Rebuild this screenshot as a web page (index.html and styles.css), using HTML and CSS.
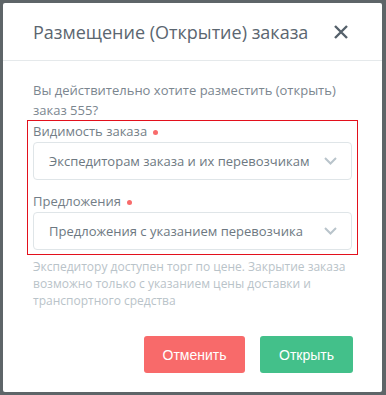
FILE: index.html
```html
<!DOCTYPE html>
<html lang="ru">
<head>
  <meta charset="UTF-8" />
  <meta name="viewport" content="width=device-width, initial-scale=1.0" />
  <title>Размещение заказа</title>
  <link rel="stylesheet" href="styles.css">
</head>
<body>
  <div class="modal">
    <div class="modal-header">
      <h2 class="modal-title">Размещение (Открытие) заказа</h2>
      <button class="close" aria-label="Закрыть">
        <svg width="14" height="14" viewBox="0 0 14 14">
          <path d="M1 1 L13 13 M13 1 L1 13" stroke="#55616b" stroke-width="2.4" stroke-linecap="butt" />
        </svg>
      </button>
    </div>

    <div class="modal-body">
      <p class="question">Вы действительно хотите разместить (открыть) заказ 555?</p>

      <div class="fields">
        <label class="field-label">Видимость заказа <span class="req"></span></label>
        <div class="select">
          <span>Экспедиторам заказа и их перевозчикам</span>
          <svg class="chev" width="13" height="8" viewBox="0 0 13 8">
            <path d="M1 1 L6.5 6.5 L12 1" fill="none" stroke="#b9c4cb" stroke-width="2" />
          </svg>
        </div>

        <label class="field-label">Предложения <span class="req"></span></label>
        <div class="select">
          <span>Предложения с указанием перевозчика</span>
          <svg class="chev" width="13" height="8" viewBox="0 0 13 8">
            <path d="M1 1 L6.5 6.5 L12 1" fill="none" stroke="#b9c4cb" stroke-width="2" />
          </svg>
        </div>
      </div>

      <p class="hint">Экспедитору доступен торг по цене. Закрытие заказа возможно только с указанием цены доставки и транспортного средства</p>
    </div>

    <div class="modal-footer">
      <button class="btn btn-cancel">Отменить</button>
      <button class="btn btn-ok">Открыть</button>
    </div>
  </div>
</body>
</html>
```

FILE: styles.css
```css
body {
  margin: 0;
  padding: 3px;
  background: #5e6568;
  font-family: 'Open Sans', sans-serif;
}

.modal {
  width: 379px;
  height: 389px;
  background: #fff;
  border-radius: 2px;
  box-sizing: border-box;
}

.modal-header {
  height: 58px;
  display: flex;
  align-items: center;
  justify-content: space-between;
  padding: 0 34px 0 30px;
  border-bottom: 1px solid #e5e9eb;
  box-sizing: border-box;
}

.modal-title {
  margin: 0;
  font-size: 18px;
  font-weight: normal;
  color: #5b6670;
}

.close {
  border: none;
  background: none;
  padding: 0;
  width: 14px;
  height: 14px;
  cursor: pointer;
}

.modal-body {
  padding: 19px 24px 0 24px;
}

.question {
  margin: 0 0 0 6px;
  font-size: 13px;
  line-height: 20px;
  color: #7b868f;
}

.fields {
  border: 1px solid #e3101c;
  padding: 1px 5px 4px 5px;
}

.field-label {
  display: block;
  font-size: 13px;
  line-height: 18px;
  color: #737e87;
  margin-bottom: 2px;
}

.req {
  display: inline-block;
  width: 5px;
  height: 5px;
  border-radius: 50%;
  background: #f86b6b;
  margin-left: 3px;
  vertical-align: middle;
}

.select {
  height: 38px;
  border: 1px solid #dfe5e8;
  border-radius: 4px;
  display: flex;
  align-items: center;
  justify-content: space-between;
  padding: 0 14px 0 15px;
  font-size: 13px;
  white-space: nowrap;
  color: #6d7881;
  box-sizing: border-box;
  margin-bottom: 12px;
}

.select:last-child {
  margin-bottom: 0;
}

.hint {
  margin: 3px 0 0 6px;
  font-size: 12px;
  line-height: 17px;
  color: #b9c3c9;
}

.modal-footer {
  display: flex;
  justify-content: flex-end;
  gap: 15px;
  padding: 27px 29px 0 0;
}

.btn {
  height: 37px;
  border: none;
  border-radius: 3px;
  color: #fff;
  font-family: 'Liberation Sans', Arial, sans-serif;
  font-size: 14px;
  cursor: pointer;
}

.btn-cancel {
  width: 101px;
  background: #f86a6a;
}

.btn-ok {
  width: 93px;
  background: #43c08a;
}
```
